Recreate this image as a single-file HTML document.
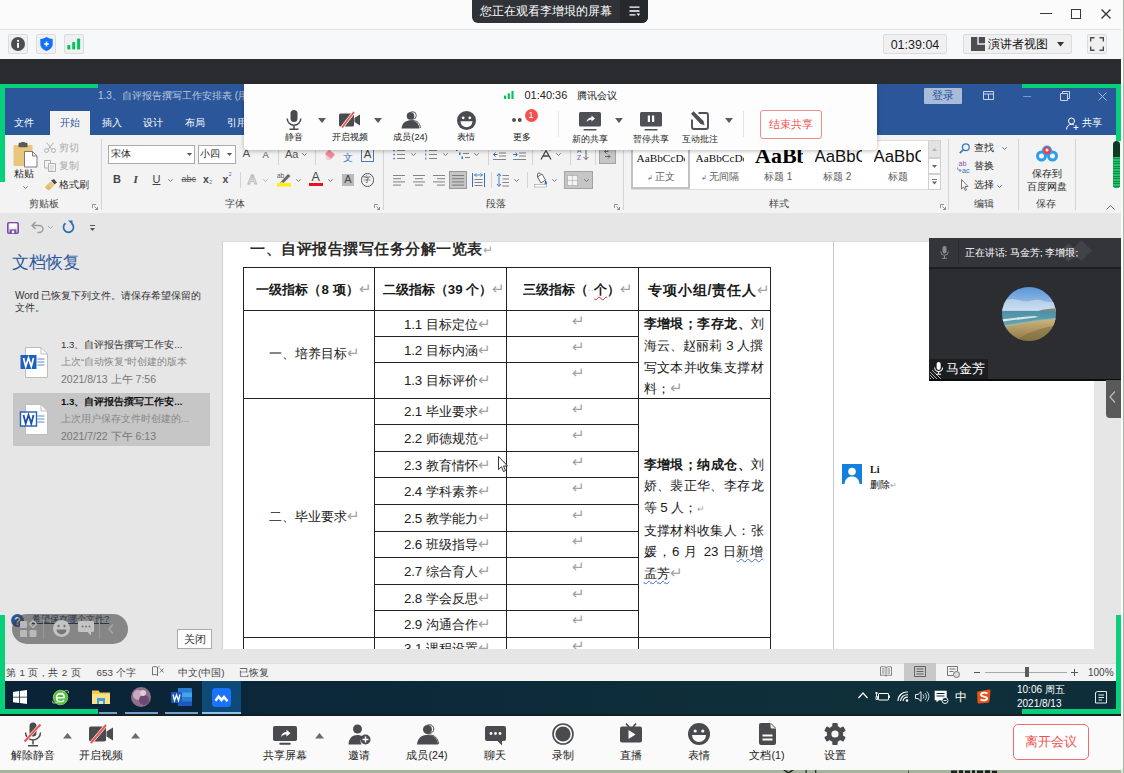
<!DOCTYPE html>
<html><head><meta charset="utf-8"><title>meeting</title>
<style>
html,body{margin:0;padding:0;width:1124px;height:773px;overflow:hidden;background:#a3b69c;font-family:"Liberation Sans",sans-serif;}
*{box-sizing:border-box;}
.a{position:absolute;white-space:nowrap;line-height:1;}
.s{font-family:"Liberation Sans",sans-serif;}
svg{position:absolute;overflow:visible;}
#win{left:0;top:0;width:1122.500px;height:769.500px;background:#fbfbfb;border-radius:0 0 4px 0;overflow:hidden;}
.ib{width:20px;height:20px;top:34px;background:#f0f0f1;border:1px solid #dcdcde;border-radius:2px;}
.wt{color:#fff;font-size:10px;top:117.500px;}
.rl{color:#444;font-size:10.5px;top:199px;}
.rt{color:#333;font-size:11px;}
.sep{width:1px;background:#d4d4d4;top:140px;height:70px;}
.hl{height:1px;background:#222;}
.vl{width:1px;background:#222;}
.c2{font-size:13.3px;color:#222;left:404px;}
.ret{color:#a3a3a3;font-size:15px;line-height:0;font-family:"Liberation Sans",sans-serif;font-weight:normal;letter-spacing:0}
.tl{font-size:11px;color:#333;}
.bt{font-size:10.700px;color:#222;top:749.500px;text-align:center;width:80px;}
.ft{font-size:9.200px;color:#222;top:133px;text-align:center;width:70px;}
</style></head><body>
<div class="a" style="left:1121px;top:0;width:3px;height:773px;background:#e3e7e2"></div><div class="a" style="left:1122.500px;top:0;width:1px;height:773px;background:#a3bba1"></div>
<svg style="left:782px;top:770px" width="220" height="3" viewBox="0 0 220 3"><path d="M1 0l4 3h3l4-3h-2.500L6.500 2 3.500 0z" fill="#1f2a1f"></path><rect x="23.500" y="0" width="1.300" height="3" fill="#2a352a"></rect><rect x="33" y="0" width="1.300" height="3" fill="#2a352a"></rect><rect x="126" y="0.500" width="1" height="2.500" fill="#4a5a48"></rect><path d="M169 0.500h6v2.500h-6zM177 0.300h4v2.700h-4zM183 0.600h5v2.400h-5zM190 0.300h3v2.700h-3zM195 0.500h6v2.500h-6zM203 0.300h5v2.700h-5zM210 0.800h5v2.200h-5z" fill="#1c241c"></path></svg>
<div id="win" class="a">
<!--TITLEBAR-->
<div class="a" style="left:0;top:0;width:1121px;height:30px;background:#fbfbfb;border-bottom:1px solid #e2e3e5"></div>
<div class="a" style="left:472px;top:0;width:176px;height:23px;background:#2f3237;border-radius:0 0 6px 6px;overflow:hidden">
  <div class="a" style="left:148px;top:0;width:28px;height:23px;background:#26282c"></div>
  <div class="a" style="left:8px;top:5px;font-size:12px;color:#fff"><span style="display:inline-block;width:132.00px;text-align:justify;text-align-last:justify;white-space:nowrap;">您正在观看李增垠的屏幕</span></div>
  <svg style="left:157px;top:6px" width="12" height="11" viewBox="0 0 12 11"><path d="M0.5 1.2H10.5M0.5 5H10.5M0.5 8.8H6.5" stroke="#fff" stroke-width="1.3" fill="none"></path><path d="M7.6 7.6h3.6l-1.8 2.4z" fill="#fff"></path></svg>
</div>
<div class="a" style="left:1040px;top:13px;width:12px;height:1.200px;background:#3a3a3a"></div>
<div class="a" style="left:1071px;top:9px;width:10px;height:10px;border:1.300px solid #3a3a3a"></div>
<svg style="left:1101px;top:9px" width="10" height="10" viewBox="0 0 10 10"><path d="M0.5 0.5L9.5 9.5M9.5 0.5L0.5 9.5" stroke="#333" stroke-width="1.4"></path></svg>
<!--SECONDBAR-->
<div class="a" style="left:0;top:30px;width:1121px;height:29px;background:#f7f8fa"></div>
<div class="a ib" style="left:8px"></div>
<svg style="left:11px;top:37px" width="14" height="14" viewBox="0 0 14 14"><circle cx="7" cy="7" r="7" fill="#4c4d50"></circle><rect x="6.1" y="5.8" width="1.9" height="5" fill="#fff"></rect><circle cx="7.05" cy="3.8" r="1.1" fill="#fff"></circle></svg>
<div class="a ib" style="left:36px"></div>
<svg style="left:39.5px;top:37px" width="13" height="14" viewBox="0 0 13 14"><path d="M6.5 0C4.5 1.3 2.5 1.8 0.3 1.9V7c0 3.4 2.5 5.6 6.2 7 3.700-1.4 6.200-3.600 6.200-7V1.900C10.500 1.800 8.500 1.300 6.500 0z" fill="#1470ff"></path><path d="M6.500 4.600v4.800M4.100 7h4.800" stroke="#fff" stroke-width="1.500"></path></svg>
<div class="a ib" style="left:64px"></div>
<svg style="left:67px;top:38px" width="14" height="12" viewBox="0 0 14 12"><rect x="0.3" y="7" width="3" height="4.500" rx="0.8" fill="#07c160"></rect><rect x="5.2" y="4" width="3" height="7.500" rx="0.8" fill="#07c160"></rect><rect x="10.100" y="0.5" width="3" height="11" rx="0.8" fill="#07c160"></rect></svg>
<div class="a" style="left:883px;top:34px;width:64px;height:20px;background:#f0f0f1;border:1px solid #dcdcde;border-radius:2px;font-size:12.500px;color:#1c1c1c;text-align:center;padding-top:3.500px">01:39:04</div>
<div class="a" style="left:963px;top:34px;width:109px;height:20px;background:#f0f0f1;border:1px solid #dcdcde;border-radius:2px"></div>
<svg style="left:971px;top:37px" width="14" height="14" viewBox="0 0 14 14"><path d="M0 0h6.300v7.700H14V14H0z" fill="#4c4d50"></path><rect x="7.700" y="0" width="6.300" height="6.300" fill="#4c4d50"></rect></svg>
<div class="a" style="left:988px;top:38px;font-size:12px;color:#111"><span style="display:inline-block;width:60.00px;text-align:justify;text-align-last:justify;white-space:nowrap;">演讲者视图</span></div>
<svg style="left:1057px;top:42px" width="7" height="5" viewBox="0 0 7 5"><path d="M0 0h7L3.500 4.500z" fill="#333"></path></svg>
<div class="a ib" style="left:1087px"></div>
<svg style="left:1090px;top:37px" width="14" height="14" viewBox="0 0 14 14"><path d="M0.700 4.500V0.700H4.500M9.500 0.700H13.300V4.500M13.300 9.500V13.300H9.500M4.500 13.300H0.700V9.500" stroke="#4c4d50" stroke-width="1.400" fill="none"></path></svg>
<!--DARKBAR-->
<div class="a" style="left:0;top:59px;width:1121px;height:25px;background:#2a2c30"></div>
<!--WORD-->
<div class="a" style="left:0;top:84px;width:1121px;height:51px;background:#2b579a"></div>
<div class="a" style="left:98px;top:90.500px;font-size:10px;color:#b9c7df"><span style="display:inline-block;width:150.02px;text-align:justify;text-align-last:justify;white-space:nowrap;">1.3、自评报告撰写工作安排表 (用</span></div>
<div class="a" style="left:50px;top:111px;width:40px;height:24px;background:#f3f3f3"></div>
<div class="a wt" style="left:14px"><span style="display:inline-block;width:20.00px;text-align:justify;text-align-last:justify;white-space:nowrap;">文件</span></div>
<div class="a wt" style="left:60px;color:#2b579a"><span style="display:inline-block;width:20.00px;text-align:justify;text-align-last:justify;white-space:nowrap;">开始</span></div>
<div class="a wt" style="left:101.500px"><span style="display:inline-block;width:20.00px;text-align:justify;text-align-last:justify;white-space:nowrap;">插入</span></div>
<div class="a wt" style="left:143px"><span style="display:inline-block;width:20.00px;text-align:justify;text-align-last:justify;white-space:nowrap;">设计</span></div>
<div class="a wt" style="left:185px"><span style="display:inline-block;width:20.00px;text-align:justify;text-align-last:justify;white-space:nowrap;">布局</span></div>
<div class="a wt" style="left:227px"><span style="display:inline-block;width:20.00px;text-align:justify;text-align-last:justify;white-space:nowrap;">引用</span></div>
<div class="a" style="left:924px;top:88px;width:38px;height:16px;background:#a8bbd9;border-radius:1px;font-size:11px;color:#2b579a;text-align:center;padding-top:2px"><span style="display:inline-block;width:22.00px;text-align:justify;text-align-last:justify;white-space:nowrap;">登录</span></div>
<svg style="left:983px;top:91px" width="11" height="9" viewBox="0 0 11 9"><path d="M0.500 0.500h10v8h-10zM0.500 3h10M5.500 3v5.500" stroke="#c9d4e8" stroke-width="1" fill="none"></path></svg>
<div class="a" style="left:1023px;top:96px;width:8px;height:1px;background:#7f98c2"></div>
<svg style="left:1060px;top:91px" width="10" height="10" viewBox="0 0 10 10"><path d="M0.500 2.500h7v7h-7zM2.500 2.500v-2h7v7h-2" stroke="#c9d4e8" stroke-width="1" fill="none"></path></svg>
<svg style="left:1098px;top:92px" width="9" height="9" viewBox="0 0 9 9"><path d="M0.500 0.500L8.500 8.500M8.500 0.500L0.500 8.500" stroke="#a9bad6" stroke-width="1"></path></svg>
<svg style="left:1066px;top:117px" width="13" height="13" viewBox="0 0 13 13"><circle cx="5.500" cy="4" r="3" stroke="#fff" stroke-width="1" fill="none"></circle><path d="M0.500 12.500c0.300-3.500 2.300-5.200 5-5.200 1 0 1.800 0.200 2.500 0.700M10 8v5M7.500 10.500h5" stroke="#fff" stroke-width="1" fill="none"></path></svg>
<div class="a wt" style="left:1081.500px"><span style="display:inline-block;width:20.00px;text-align:justify;text-align-last:justify;white-space:nowrap;">共享</span></div>
<!-- ribbon bg -->
<div class="a" style="left:0;top:135px;width:1121px;height:78.500px;background:#f3f3f3;border-bottom:1px solid #d2d2d2"></div>
<!--RIBBON-->
<svg style="left:13px;top:142px" width="25" height="26" viewBox="0 0 25 26"><rect x="0.500" y="3" width="19" height="21" rx="1" fill="#e9c67c"></rect><rect x="5.500" y="0.800" width="9" height="4.500" rx="1" fill="#5a5a5a"></rect><rect x="8" y="0" width="4" height="2.500" rx="1" fill="#5a5a5a"></rect><path d="M11.500 9.500h8l4.500 4.500v11h-12.500z" fill="#fff" stroke="#6d6d6d" stroke-width="0.900"></path><path d="M19.500 9.500v4.500h4.500" fill="none" stroke="#6d6d6d" stroke-width="0.900"></path></svg>
<div class="a " style="left:13.5px;top:169.4px;font-size:10px;color:#262626;"><span style="display:inline-block;width:20.00px;text-align:justify;text-align-last:justify;white-space:nowrap;">粘贴</span></div>
<svg style="left:22.5px;top:186.0px" width="5" height="3" viewBox="0 0 5 3"><path d="M0.300 0.300L2.500 2.500 4.700 0.300" stroke="#666" stroke-width="0.900" fill="none"></path></svg>
<svg style="left:44px;top:142px" width="12" height="11" viewBox="0 0 12 11"><path d="M2.500 0.500l5.500 7M9.500 0.500L4 7.500" stroke="#b0b0b0" stroke-width="1"></path><circle cx="2.500" cy="8.500" r="2" stroke="#b0b0b0" stroke-width="1" fill="none"></circle><circle cx="9.500" cy="8.500" r="2" stroke="#b0b0b0" stroke-width="1" fill="none"></circle></svg>
<div class="a " style="left:59.3px;top:142.5px;font-size:10px;color:#a9a9a9;"><span style="display:inline-block;width:20.00px;text-align:justify;text-align-last:justify;white-space:nowrap;">剪切</span></div>
<svg style="left:43.500px;top:160px" width="12" height="12" viewBox="0 0 12 12"><path d="M0.500 0.500h6v7.500h-6z" stroke="#b0b0b0" fill="none"></path><path d="M4.500 3.500h7v8h-7z" stroke="#b0b0b0" fill="#f3f3f3"></path><path d="M6 6h4M6 8h4M6 10h3" stroke="#c4c4c4" stroke-width="0.800"></path></svg>
<div class="a " style="left:59.3px;top:161.1px;font-size:10px;color:#a9a9a9;"><span style="display:inline-block;width:20.00px;text-align:justify;text-align-last:justify;white-space:nowrap;">复制</span></div>
<svg style="left:44px;top:179px" width="13" height="12" viewBox="0 0 13 12"><path d="M7 1.500l3-1.500 3 3.500-2.500 2z" fill="#4d4d4d"></path><path d="M6.500 2.500L10.500 6 5 11.500 0.500 8z" fill="#e9c67c"></path><path d="M2 8.500l3 2.500M3.500 7l3 2.500" stroke="#c49a44" stroke-width="0.700"></path></svg>
<div class="a " style="left:59.3px;top:180.3px;font-size:10px;color:#262626;"><span style="display:inline-block;width:30.00px;text-align:justify;text-align-last:justify;white-space:nowrap;">格式刷</span></div>
<div class="a " style="left:28.6px;top:199.300px;font-size:10px;color:#444;"><span style="display:inline-block;width:30.00px;text-align:justify;text-align-last:justify;white-space:nowrap;">剪贴板</span></div>
<svg style="left:92px;top:204px" width="6" height="6" viewBox="0 0 6 6"><path d="M0.500 4V0.500H4M2.500 2.500l3 3M5.500 3v2.500H3" stroke="#777" stroke-width="0.800" fill="none"></path></svg>
<div class="a" style="left:101px;top:139px;width:1px;height:71px;background:#d4d4d4"></div>
<div class="a" style="left:107.500px;top:145px;width:87.500px;height:18.500px;background:#fff;border:1px solid #ababab"></div>
<div class="a " style="left:110.5px;top:149.0px;font-size:10px;color:#262626;"><span style="display:inline-block;width:20.00px;text-align:justify;text-align-last:justify;white-space:nowrap;">宋体</span></div>
<svg style="left:187px;top:153px" width="5" height="3" viewBox="0 0 5 3"><path d="M0 0h5L2.500 3z" fill="#555"></path></svg>
<div class="a" style="left:197.500px;top:145px;width:38px;height:18.500px;background:#fff;border:1px solid #ababab"></div>
<div class="a " style="left:200px;top:149.0px;font-size:10px;color:#262626;"><span style="display:inline-block;width:20.00px;text-align:justify;text-align-last:justify;white-space:nowrap;">小四</span></div>
<svg style="left:227px;top:153px" width="5" height="3" viewBox="0 0 5 3"><path d="M0 0h5L2.500 3z" fill="#555"></path></svg>
<div class="a " style="left:242.5px;top:148.4px;font-size:11.5px;color:#555;">A</div>
<svg style="left:249px;top:147px" width="4" height="3" viewBox="0 0 4 3"><path d="M0 3L2 0.500 4 3" fill="#3b78c8"></path></svg>
<div class="a " style="left:262.5px;top:150.2px;font-size:9.5px;color:#555;">A</div>
<svg style="left:268px;top:148px" width="4" height="3" viewBox="0 0 4 3"><path d="M0 0L2 2.500 4 0" fill="#3b78c8"></path></svg>
<div class="a" style="left:278px;top:144px;width:1px;height:21px;background:#d4d4d4"></div>
<div class="a " style="left:285px;top:148.7px;font-size:11px;color:#555;">Aa</div>
<svg style="left:302.2px;top:153.0px" width="5" height="3" viewBox="0 0 5 3"><path d="M0.300 0.300L2.500 2.500 4.700 0.300" stroke="#666" stroke-width="0.900" fill="none"></path></svg>
<div class="a" style="left:315px;top:144px;width:1px;height:21px;background:#d4d4d4"></div>
<svg style="left:324px;top:148px" width="12" height="12" viewBox="0 0 12 12"><path d="M5 1.500l6 5-4 4.500-6-5z" fill="#ec8a9a"></path><path d="M1 6l6 5-1.500 1H3z" fill="#f6c7cf"></path><path d="M0 0.800L3 0l-1.500 2.500z" fill="#777"></path></svg>
<div class="a " style="left:343px;top:153.4px;font-size:9.5px;color:#2f6fc5;"><span style="display:inline-block;width:10.00px;text-align:justify;text-align-last:justify;white-space:nowrap;">文</span></div>
<div class="a " style="left:342.5px;top:146.4px;font-size:5.5px;color:#555;">wén</div>
<div class="a" style="left:361px;top:147px;width:13px;height:14.500px;border:1px solid #4d79b8;font-size:11.500px;color:#444;text-align:center;padding-top:0.500px">A</div>
<div class="a " style="left:113px;top:173.8px;font-size:11px;color:#444;font-weight:bold">B</div>
<div class="a " style="left:133.5px;top:173.8px;font-size:11px;color:#444;font-style:italic;font-weight:bold;font-family:'Liberation Serif',serif">I</div>
<div class="a " style="left:152.5px;top:173.6px;font-size:11px;color:#444;text-decoration:underline">U</div>
<svg style="left:168.2px;top:178.5px" width="5" height="3" viewBox="0 0 5 3"><path d="M0.300 0.300L2.500 2.500 4.700 0.300" stroke="#666" stroke-width="0.900" fill="none"></path></svg>
<div class="a " style="left:181.5px;top:175.0px;font-size:9px;color:#555;text-decoration:line-through">abc</div>
<div class="a " style="left:203px;top:174.0px;font-size:10.5px;color:#444;font-weight:bold">x</div>
<div class="a " style="left:209px;top:180.4px;font-size:5.5px;color:#3b78c8;">2</div>
<div class="a " style="left:222.5px;top:174.0px;font-size:10.5px;color:#444;font-weight:bold">x</div>
<div class="a " style="left:228.5px;top:171.9px;font-size:5.5px;color:#3b78c8;">2</div>
<div class="a" style="left:240px;top:172px;width:1px;height:16px;background:#d4d4d4"></div>
<div class="a " style="left:247.5px;top:172.8px;font-size:13px;color:#f3f3f3;-webkit-text-stroke:0.800px #b4b4b4;font-weight:bold">A</div>
<svg style="left:263.3px;top:178.5px" width="5" height="3" viewBox="0 0 5 3"><path d="M0.300 0.300L2.500 2.500 4.700 0.300" stroke="#aaa" stroke-width="0.900" fill="none"></path></svg>
<svg style="left:277px;top:172px" width="15" height="15" viewBox="0 0 15 15"><text x="0" y="6" font-size="6.500" fill="#555" font-family="Liberation Sans">ab</text><path d="M4 9.500L11 2l2.500 2L6.500 11z" fill="#6a6a6a"></path><path d="M3.500 10L6 12l-3 0.500z" fill="#555"></path><rect x="0" y="11" width="14" height="3.500" fill="#ffef00"></rect></svg>
<svg style="left:296.2px;top:178.5px" width="5" height="3" viewBox="0 0 5 3"><path d="M0.300 0.300L2.500 2.500 4.700 0.300" stroke="#666" stroke-width="0.900" fill="none"></path></svg>
<div class="a " style="left:311.5px;top:171.4px;font-size:12.5px;color:#444;">A</div>
<div class="a" style="left:309px;top:182.500px;width:13.500px;height:3.500px;background:#e81123"></div>
<svg style="left:328.4px;top:178.5px" width="5" height="3" viewBox="0 0 5 3"><path d="M0.300 0.300L2.500 2.500 4.700 0.300" stroke="#666" stroke-width="0.900" fill="none"></path></svg>
<div class="a" style="left:342px;top:173.500px;width:12px;height:12px;background:#b9b9b9;font-size:11px;color:#444;text-align:center;padding-top:0.500px">A</div>
<div class="a" style="left:360.500px;top:173px;width:13.500px;height:13.500px;border:1px solid #555;border-radius:50%;font-size:8px;color:#333;text-align:center;padding-top:2px"><span style="display:inline-block;width:8.00px;text-align:justify;text-align-last:justify;white-space:nowrap;">字</span></div>
<div class="a " style="left:224.500px;top:199.300px;font-size:10px;color:#444;"><span style="display:inline-block;width:20.00px;text-align:justify;text-align-last:justify;white-space:nowrap;">字体</span></div>
<svg style="left:374px;top:204px" width="6" height="6" viewBox="0 0 6 6"><path d="M0.500 4V0.500H4M2.500 2.500l3 3M5.500 3v2.500H3" stroke="#777" stroke-width="0.800" fill="none"></path></svg>
<div class="a" style="left:382.5px;top:139px;width:1px;height:71px;background:#d4d4d4"></div>
<svg style="left:393px;top:149px" width="12" height="11" viewBox="0 0 12 11"><path d="M4 1.5h8" stroke="#6e6e6e" stroke-width="0.850"></path><rect x="0.300" y="0.8" width="1.500" height="1.500" fill="#2f6fc5"></rect><path d="M4 5.5h8" stroke="#6e6e6e" stroke-width="0.850"></path><rect x="0.300" y="4.8" width="1.500" height="1.500" fill="#2f6fc5"></rect><path d="M4 9.5h8" stroke="#6e6e6e" stroke-width="0.850"></path><rect x="0.300" y="8.8" width="1.500" height="1.500" fill="#2f6fc5"></rect></svg>
<svg style="left:410.5px;top:153.0px" width="5" height="3" viewBox="0 0 5 3"><path d="M0.300 0.300L2.500 2.500 4.700 0.300" stroke="#666" stroke-width="0.900" fill="none"></path></svg>
<svg style="left:424.5px;top:149px" width="12" height="11" viewBox="0 0 12 11"><path d="M4 1.5h8" stroke="#6e6e6e" stroke-width="0.850"></path><rect x="0.300" y="0.5" width="1" height="2" fill="#2f6fc5"></rect><path d="M4 5.5h8" stroke="#6e6e6e" stroke-width="0.850"></path><rect x="0.300" y="4.5" width="1" height="2" fill="#2f6fc5"></rect><path d="M4 9.5h8" stroke="#6e6e6e" stroke-width="0.850"></path><rect x="0.300" y="8.5" width="1" height="2" fill="#2f6fc5"></rect></svg>
<svg style="left:443.0px;top:153.0px" width="5" height="3" viewBox="0 0 5 3"><path d="M0.300 0.300L2.500 2.500 4.700 0.300" stroke="#666" stroke-width="0.900" fill="none"></path></svg>
<svg style="left:455.500px;top:148px" width="14" height="12" viewBox="0 0 14 12"><path d="M4 1.500h6M7 5.500h6M9 9.500h5" stroke="#6e6e6e" stroke-width="0.850"></path><rect x="0" y="0.500" width="1.500" height="2.500" fill="#2f6fc5"></rect><rect x="3" y="4.500" width="1.500" height="2.500" fill="#2f6fc5"></rect><rect x="5.500" y="8.500" width="1.500" height="2.500" fill="#2f6fc5"></rect></svg>
<svg style="left:473.5px;top:153.0px" width="5" height="3" viewBox="0 0 5 3"><path d="M0.300 0.300L2.500 2.500 4.700 0.300" stroke="#666" stroke-width="0.900" fill="none"></path></svg>
<div class="a" style="left:488px;top:144px;width:1px;height:21px;background:#d4d4d4"></div>
<svg style="left:493px;top:149px" width="13" height="11" viewBox="0 0 13 11"><path d="M0 0.500h13M6 4h7M6 7h7M0 10.500h13" stroke="#6e6e6e" stroke-width="0.850"></path><path d="M4.500 5.500H0.500M2.500 3.500l-2 2 2 2" stroke="#2f6fc5" stroke-width="1" fill="none"></path></svg>
<svg style="left:513px;top:149px" width="13" height="11" viewBox="0 0 13 11"><path d="M0 0.500h13M6 4h7M6 7h7M0 10.500h13" stroke="#6e6e6e" stroke-width="0.850"></path><path d="M0 5.500h4M2.500 3.500l2 2-2 2" stroke="#2f6fc5" stroke-width="1" fill="none"></path></svg>
<div class="a" style="left:532px;top:144px;width:1px;height:21px;background:#d4d4d4"></div>
<svg style="left:538.500px;top:148px" width="14" height="12" viewBox="0 0 14 12"><path d="M2 11.500L7 2.500l5 9M4 8h6" stroke="#444" stroke-width="1.300" fill="none"></path><path d="M0 1.500h4M2.500 0l1.500 1.500L2.500 3M14 1.500h-4M11.500 0L10 1.500 11.500 3" stroke="#2f6fc5" stroke-width="0.800" fill="none"></path></svg>
<svg style="left:555.5px;top:153.0px" width="5" height="3" viewBox="0 0 5 3"><path d="M0.300 0.300L2.500 2.500 4.700 0.300" stroke="#666" stroke-width="0.900" fill="none"></path></svg>
<div class="a" style="left:569.5px;top:144px;width:1px;height:21px;background:#d4d4d4"></div>
<svg style="left:576.500px;top:147px" width="12" height="14" viewBox="0 0 12 14"><text x="0" y="6" font-size="6.500" fill="#2f6fc5" font-family="Liberation Sans">A</text><text x="0" y="13" font-size="6.500" fill="#8a4fb0" font-family="Liberation Sans">Z</text><path d="M9 0.500v12M6.500 10L9 12.500 11.500 10" stroke="#555" stroke-width="0.900" fill="none"></path></svg>
<div class="a" style="left:594.5px;top:144px;width:1px;height:21px;background:#d4d4d4"></div>
<div class="a" style="left:598.500px;top:145px;width:17.500px;height:18.500px;background:#c6c6c6;border:1px solid #a3a3a3"></div>
<svg style="left:602px;top:148px" width="10" height="12" viewBox="0 0 10 12"><path d="M6 0v3.500H2.500M4.500 1.500l-2 2 2 2" stroke="#555" stroke-width="0.900" fill="none"></path><path d="M3 8.500h5M6 6.500l2 2-2 2" stroke="#555" stroke-width="0.900" fill="none"></path></svg>
<svg style="left:393px;top:174.500px" width="12" height="11" viewBox="0 0 12 11"><path d="M0 0.5h12" stroke="#6e6e6e" stroke-width="0.850"></path><path d="M0 3.7h8" stroke="#6e6e6e" stroke-width="0.850"></path><path d="M0 6.9h12" stroke="#6e6e6e" stroke-width="0.850"></path><path d="M0 10.1h8" stroke="#6e6e6e" stroke-width="0.850"></path></svg>
<svg style="left:413px;top:174.500px" width="12" height="11" viewBox="0 0 12 11"><path d="M0.0 0.5h12" stroke="#6e6e6e" stroke-width="0.850"></path><path d="M2.0 3.7h8" stroke="#6e6e6e" stroke-width="0.850"></path><path d="M0.0 6.9h12" stroke="#6e6e6e" stroke-width="0.850"></path><path d="M2.0 10.1h8" stroke="#6e6e6e" stroke-width="0.850"></path></svg>
<svg style="left:432.5px;top:174.500px" width="12" height="11" viewBox="0 0 12 11"><path d="M0 0.5h12" stroke="#6e6e6e" stroke-width="0.850"></path><path d="M4 3.7h8" stroke="#6e6e6e" stroke-width="0.850"></path><path d="M0 6.9h12" stroke="#6e6e6e" stroke-width="0.850"></path><path d="M4 10.1h8" stroke="#6e6e6e" stroke-width="0.850"></path></svg>
<div class="a" style="left:449px;top:170.500px;width:18px;height:18.500px;background:#c6c6c6;border:1px solid #999"></div>
<svg style="left:452px;top:174.500px" width="12" height="11" viewBox="0 0 12 11"><path d="M0 0.5h12" stroke="#6e6e6e" stroke-width="0.850"></path><path d="M0 3.7h12" stroke="#6e6e6e" stroke-width="0.850"></path><path d="M0 6.9h12" stroke="#6e6e6e" stroke-width="0.850"></path><path d="M0 10.1h12" stroke="#6e6e6e" stroke-width="0.850"></path></svg>
<svg style="left:471.500px;top:173px" width="13" height="14" viewBox="0 0 13 14"><path d="M0.500 0v14M12.500 0v14" stroke="#2f6fc5" stroke-width="1"></path><path d="M2.500 2h8M4.500 0.500L2.500 2l2 1.500M8.500 0.500l2 1.500-2 1.500" stroke="#2f6fc5" stroke-width="0.800" fill="none"></path><path d="M2.500 6.500h8M2.500 9.500h8M2.500 12.500h8" stroke="#6e6e6e" stroke-width="0.850"></path></svg>
<div class="a" style="left:490.5px;top:172px;width:1px;height:16px;background:#d4d4d4"></div>
<svg style="left:497px;top:173px" width="12" height="14" viewBox="0 0 12 14"><path d="M2 1v12M0 3l2-2.500L4 3M0 11l2 2.500L4 11" stroke="#2f6fc5" stroke-width="0.900" fill="none"></path><path d="M5.500 2.500h6.500M5.500 6h6.500M5.500 9.500h6.500M5.500 13h6.500" stroke="#6e6e6e" stroke-width="0.850"></path></svg>
<svg style="left:513.5px;top:178.5px" width="5" height="3" viewBox="0 0 5 3"><path d="M0.300 0.300L2.500 2.500 4.700 0.300" stroke="#666" stroke-width="0.900" fill="none"></path></svg>
<div class="a" style="left:527px;top:172px;width:1px;height:16px;background:#d4d4d4"></div>
<svg style="left:533.500px;top:172.500px" width="14" height="14" viewBox="0 0 14 14"><path d="M3.500 4l4.500-3 3.500 6L7 10z" fill="#fff" stroke="#555" stroke-width="0.900"></path><path d="M3.500 4V1.500a1.500 1.500 0 0 1 3 0" stroke="#555" stroke-width="0.900" fill="none"></path><path d="M11.500 7c1 1.500 1.500 2.500 1.500 3.300a1.200 1.200 0 0 1-2.400 0C10.600 9.500 11 8.500 11.500 7z" fill="#2f6fc5"></path><rect x="0.500" y="11.500" width="12" height="2.500" fill="#fff" stroke="#9a9a9a" stroke-width="0.600"></rect></svg>
<svg style="left:552.2px;top:178.5px" width="5" height="3" viewBox="0 0 5 3"><path d="M0.300 0.300L2.500 2.500 4.700 0.300" stroke="#666" stroke-width="0.900" fill="none"></path></svg>
<div class="a" style="left:563.500px;top:170.500px;width:29.500px;height:18.500px;background:#c6c6c6;border:1px solid #a3a3a3"></div>
<svg style="left:566.500px;top:174.500px" width="11" height="11" viewBox="0 0 11 11"><rect x="0.500" y="0.500" width="10" height="10" fill="#f4f4f4" stroke="#888" stroke-width="0.800" stroke-dasharray="1 1"></rect><path d="M5.500 0.500v10M0.500 5.500h10" stroke="#888" stroke-width="0.800" stroke-dasharray="1 1"></path></svg>
<svg style="left:584.1px;top:178.5px" width="5" height="3" viewBox="0 0 5 3"><path d="M0.300 0.300L2.500 2.500 4.700 0.300" stroke="#666" stroke-width="0.900" fill="none"></path></svg>
<div class="a " style="left:485.5px;top:199.300px;font-size:10px;color:#444;"><span style="display:inline-block;width:20.00px;text-align:justify;text-align-last:justify;white-space:nowrap;">段落</span></div>
<svg style="left:614px;top:204px" width="6" height="6" viewBox="0 0 6 6"><path d="M0.500 4V0.500H4M2.500 2.500l3 3M5.500 3v2.500H3" stroke="#777" stroke-width="0.800" fill="none"></path></svg>
<div class="a" style="left:622.5px;top:139px;width:1px;height:71px;background:#d4d4d4"></div>
<div class="a" style="left:630.500px;top:140px;width:298px;height:49.500px;background:#fff;border:1px solid #dcdcdc"></div>
<div class="a" style="left:631px;top:141px;width:58.500px;height:48px;border:2px solid #c2c2c2"></div>
<div class="a" style="left:636.5px;top:145px;width:48.5px;height:25px;overflow:hidden"><div class="a" style="left:0;top:8px;font-size:11.300px;font-family:'Liberation Serif',serif;color:#111;">AaBbCcDc</div></div>
<div class="a " style="left:646.5px;top:172.4px;font-size:10px;color:#5a5a5a;"><span style="font-size:7px;color:#777;margin-right:2.800px">↲</span><span style="display:inline-block;width:20.00px;text-align:justify;text-align-last:justify;white-space:nowrap;">正文</span></div>
<div class="a" style="left:695.5px;top:145px;width:48.5px;height:25px;overflow:hidden"><div class="a" style="left:0;top:8px;font-size:11.300px;font-family:'Liberation Serif',serif;color:#111;">AaBbCcDc</div></div>
<div class="a " style="left:700.5px;top:172.4px;font-size:10px;color:#5a5a5a;"><span style="font-size:7px;color:#777;margin-right:2.800px">↲</span><span style="display:inline-block;width:30.00px;text-align:justify;text-align-last:justify;white-space:nowrap;">无间隔</span></div>
<div class="a" style="left:755px;top:145px;width:48px;height:25px;overflow:hidden"><div class="a" style="left:0;top:0px;font-size:22px;font-family:'Liberation Serif',serif;color:#000;font-weight:bold;">AaBb</div></div>
<div class="a " style="left:764px;top:172.4px;font-size:10px;color:#5a5a5a;"><span style="display:inline-block;width:28.34px;text-align:justify;text-align-last:justify;white-space:nowrap;">标题 1</span></div>
<div class="a" style="left:814.5px;top:145px;width:47.5px;height:25px;overflow:hidden"><div class="a" style="left:0;top:4px;font-size:16.800px;font-family:'Liberation Sans',sans-serif;color:#111;">AaBbC</div></div>
<div class="a " style="left:823px;top:172.4px;font-size:10px;color:#5a5a5a;"><span style="display:inline-block;width:28.34px;text-align:justify;text-align-last:justify;white-space:nowrap;">标题 2</span></div>
<div class="a" style="left:873.5px;top:145px;width:47.5px;height:25px;overflow:hidden"><div class="a" style="left:0;top:4px;font-size:16.800px;font-family:'Liberation Sans',sans-serif;color:#111;">AaBbC</div></div>
<div class="a " style="left:887.5px;top:172.4px;font-size:10px;color:#5a5a5a;"><span style="display:inline-block;width:20.00px;text-align:justify;text-align-last:justify;white-space:nowrap;">标题</span></div>
<div class="a" style="left:928px;top:140px;width:12.500px;height:17.500px;background:#e3e3e3;border:1px solid #d0d0d0"></div>
<svg style="left:931.500px;top:148px" width="5" height="3" viewBox="0 0 5 3"><path d="M0 3h5L2.500 0z" fill="#b5b5b5"></path></svg>
<div class="a" style="left:928px;top:158px;width:12.500px;height:15.500px;background:#fdfdfd;border:1px solid #d0d0d0"></div>
<svg style="left:931.500px;top:165px" width="5" height="3" viewBox="0 0 5 3"><path d="M0 0h5L2.500 3z" fill="#666"></path></svg>
<div class="a" style="left:928px;top:174px;width:12.500px;height:15.500px;background:#fdfdfd;border:1px solid #d0d0d0"></div>
<svg style="left:931.500px;top:179px" width="5" height="6" viewBox="0 0 5 6"><path d="M0 0.500h5" stroke="#666" stroke-width="0.900"></path><path d="M0 2.500h5L2.500 5.500z" fill="#666"></path></svg>
<div class="a " style="left:768.5px;top:199.300px;font-size:10px;color:#444;"><span style="display:inline-block;width:20.00px;text-align:justify;text-align-last:justify;white-space:nowrap;">样式</span></div>
<svg style="left:939.5px;top:204px" width="6" height="6" viewBox="0 0 6 6"><path d="M0.500 4V0.500H4M2.500 2.500l3 3M5.500 3v2.500H3" stroke="#777" stroke-width="0.800" fill="none"></path></svg>
<div class="a" style="left:948px;top:139px;width:1px;height:71px;background:#d4d4d4"></div>
<svg style="left:958.500px;top:142.500px" width="11" height="11" viewBox="0 0 11 11"><circle cx="6.800" cy="4.200" r="3.400" stroke="#3b78c8" stroke-width="1.300" fill="none"></circle><path d="M4.300 6.700L0.800 10.200" stroke="#3b78c8" stroke-width="1.700"></path></svg>
<div class="a " style="left:973.5px;top:142.5px;font-size:10px;color:#262626;"><span style="display:inline-block;width:20.00px;text-align:justify;text-align-last:justify;white-space:nowrap;">查找</span></div>
<svg style="left:1001.7px;top:146.5px" width="5" height="3" viewBox="0 0 5 3"><path d="M0.300 0.300L2.500 2.500 4.700 0.300" stroke="#666" stroke-width="0.900" fill="none"></path></svg>
<svg style="left:957px;top:160px" width="14" height="13" viewBox="0 0 14 13"><text x="1.500" y="6" font-size="7" fill="#8a4fb0" font-family="Liberation Sans">ab</text><text x="5" y="12.500" font-size="7" fill="#2f6fc5" font-family="Liberation Sans">ac</text><path d="M0.500 7.500c0 2 1 3 3 3M2.500 9l1.500 1.500-1.500 1.500" stroke="#2f6fc5" stroke-width="0.800" fill="none"></path></svg>
<div class="a " style="left:973.5px;top:161.1px;font-size:10px;color:#262626;"><span style="display:inline-block;width:20.00px;text-align:justify;text-align-last:justify;white-space:nowrap;">替换</span></div>
<svg style="left:961px;top:179px" width="8" height="12" viewBox="0 0 8 12"><path d="M0.500 0.500v9.500l2.300-2 1.500 3.500 1.300-0.600L4 7.500h3z" fill="#fff" stroke="#555" stroke-width="0.800"></path></svg>
<div class="a " style="left:973.5px;top:180.3px;font-size:10px;color:#262626;"><span style="display:inline-block;width:20.00px;text-align:justify;text-align-last:justify;white-space:nowrap;">选择</span></div>
<svg style="left:997.2px;top:184.5px" width="5" height="3" viewBox="0 0 5 3"><path d="M0.300 0.300L2.500 2.500 4.700 0.300" stroke="#666" stroke-width="0.900" fill="none"></path></svg>
<div class="a " style="left:973.5px;top:199.300px;font-size:10px;color:#444;"><span style="display:inline-block;width:20.00px;text-align:justify;text-align-last:justify;white-space:nowrap;">编辑</span></div>
<div class="a" style="left:1018px;top:139px;width:1px;height:71px;background:#d4d4d4"></div>
<svg style="left:1035.500px;top:145px" width="22" height="17" viewBox="0 0 22 17"><circle cx="5.500" cy="11" r="4" stroke="#2aa0ea" stroke-width="3" fill="none"></circle><circle cx="16.500" cy="11" r="4" stroke="#2aa0ea" stroke-width="3" fill="none"></circle><circle cx="11" cy="5.500" r="3.500" stroke="#2aa0ea" stroke-width="3" fill="none"></circle><circle cx="11" cy="5.500" r="3.800" fill="#ee3d55"></circle><circle cx="11" cy="5" r="1.500" fill="#fff"></circle></svg>
<div class="a " style="left:1032px;top:169.4px;font-size:10px;color:#262626;"><span style="display:inline-block;width:30.00px;text-align:justify;text-align-last:justify;white-space:nowrap;">保存到</span></div>
<div class="a " style="left:1027px;top:182.3px;font-size:10px;color:#262626;"><span style="display:inline-block;width:40.00px;text-align:justify;text-align-last:justify;white-space:nowrap;">百度网盘</span></div>
<div class="a " style="left:1036.3px;top:199.300px;font-size:10px;color:#444;"><span style="display:inline-block;width:20.00px;text-align:justify;text-align-last:justify;white-space:nowrap;">保存</span></div>
<div class="a" style="left:1074.5px;top:139px;width:1px;height:71px;background:#d4d4d4"></div>
<svg style="left:1105.500px;top:205px" width="9" height="5" viewBox="0 0 9 5"><path d="M0.500 4.500L4.500 0.500l4 4" stroke="#555" stroke-width="0.900" fill="none"></path></svg>
<!-- QAT + body -->
<div class="a" style="left:0;top:213px;width:1121px;height:450px;background:#e6e6e6"></div>
<svg style="left:7px;top:222px" width="12" height="12" viewBox="0 0 12 12"><rect x="0.800" y="0.800" width="10.400" height="10.400" rx="1" fill="#efe9f5" stroke="#7d4aa8" stroke-width="1.600"></rect><rect x="2.600" y="1.600" width="6.800" height="3.600" fill="#fff"></rect><rect x="2.600" y="7.400" width="6.800" height="3.800" fill="#7d4aa8"></rect><rect x="4.800" y="8.600" width="2.400" height="2.600" fill="#fff"></rect></svg>
<svg style="left:31px;top:221px" width="13" height="12" viewBox="0 0 13 12"><path d="M1 4.500h7a4 3.500 0 0 1 0 7H6.500M4.500 1L1 4.500 4.500 8" stroke="#9b9b9b" stroke-width="1.400" fill="none"></path></svg>
<svg style="left:48px;top:226px" width="5" height="3" viewBox="0 0 5 3"><path d="M0 0l2.500 2.500L5 0" stroke="#aaa" fill="none"></path></svg>
<svg style="left:62px;top:220px" width="13" height="14" viewBox="0 0 13 14"><path d="M9.500 3.300A5 5 0 1 1 3.500 3.300" stroke="#2b6cb5" stroke-width="1.700" fill="none"></path><path d="M6 0.500h4.500V5z" fill="#2b6cb5"></path></svg>
<div class="a" style="left:90px;top:225px;width:5px;height:1px;background:#555"></div>
<svg style="left:90px;top:228px" width="5" height="3" viewBox="0 0 5 3"><path d="M0 0h5L2.500 3z" fill="#555"></path></svg>
<!-- left pane -->
<div class="a" style="left:11.500px;top:254px;font-size:17.400px;color:#2b579a"><span style="display:inline-block;width:68.00px;text-align:justify;text-align-last:justify;white-space:nowrap;">文档恢复</span></div>
<div class="a" style="left:15px;top:291px;font-size:10px;color:#333"><span style="display:inline-block;width:186.50px;text-align:justify;text-align-last:justify;white-space:nowrap;">Word 已恢复下列文件。请保存希望保留的</span></div><div class="a" style="left:15px;top:303px;font-size:10px;color:#333"><span style="display:inline-block;width:30.00px;text-align:justify;text-align-last:justify;white-space:nowrap;">文件。</span></div>
<div class="a" style="left:13px;top:393px;width:197px;height:53px;background:#c6c6c6"></div>
<div class="a tl" style="left:61px;top:340.200px;font-size:9.600px;color:#333"><span style="display:inline-block;width:121.34px;text-align:justify;text-align-last:justify;white-space:nowrap;">1.3、自评报告撰写工作安...</span></div>
<div class="a tl" style="left:61px;top:357.200px;font-size:9.600px;color:#888"><span style="display:inline-block;width:126.39px;text-align:justify;text-align-last:justify;white-space:nowrap;">上次“自动恢复”时创建的版本</span></div>
<div class="a tl" style="left:61px;top:374.200px;font-size:10.500px;color:#777"><span style="display:inline-block;width:94.98px;text-align:justify;text-align-last:justify;white-space:nowrap;">2021/8/13 上午 7:56</span></div>
<div class="a tl" style="left:61px;top:396.700px;font-size:9.600px;color:#111;font-weight:bold"><span style="display:inline-block;width:121.34px;text-align:justify;text-align-last:justify;white-space:nowrap;">1.3、自评报告撰写工作安...</span></div>
<div class="a tl" style="left:61px;top:413.700px;font-size:9.600px;color:#888"><span style="display:inline-block;width:128.00px;text-align:justify;text-align-last:justify;white-space:nowrap;">上次用户保存文件时创建的...</span></div>
<div class="a tl" style="left:61px;top:430.700px;font-size:10.500px;color:#777"><span style="display:inline-block;width:94.98px;text-align:justify;text-align-last:justify;white-space:nowrap;">2021/7/22 下午 6:13</span></div>
<!-- doc icons -->
<svg style="left:20px;top:346px" width="30" height="33" viewBox="0 0 30 33"><path d="M5.500 1.500h15.500l6.500 6.500v23.500h-22z" fill="#fff" stroke="#bdbdbd" stroke-width="1"></path><path d="M21 1.500v6.500h6.500" fill="none" stroke="#bdbdbd"></path><path d="M17.500 13h7M17.500 16h7M17.500 19h7" stroke="#5b8bd0" stroke-width="1.200"></path><rect x="0.500" y="9" width="16" height="14" fill="#1f5fbf"></rect><path d="M3.500 12l2.200 8.500 2.800-8.500 2.800 8.500 2.200-8.500" stroke="#fff" stroke-width="1.700" fill="none"></path></svg>
<svg style="left:20px;top:403px" width="30" height="33" viewBox="0 0 30 33"><path d="M5.500 1.500h15.500l6.500 6.500v23.500h-22z" fill="#fff" stroke="#bdbdbd" stroke-width="1"></path><path d="M21 1.500v6.500h6.500" fill="none" stroke="#bdbdbd"></path><path d="M17.500 13h7M17.500 16h7M17.500 19h7" stroke="#5b8bd0" stroke-width="1.200"></path><rect x="0.500" y="9" width="16" height="14" fill="#fff" stroke="#1f5fbf" stroke-width="1.400"></rect><path d="M3.500 12l2.200 8.500 2.800-8.500 2.800 8.500 2.200-8.500" stroke="#1f4fa8" stroke-width="1.800" fill="none"></path></svg>
<!-- help + close -->
<svg style="left:11px;top:614px" width="13" height="13" viewBox="0 0 13 13"><circle cx="6.500" cy="6.500" r="6.500" fill="#2b579a"></circle><text x="6.500" y="10.500" font-size="10" font-weight="bold" fill="#fff" text-anchor="middle" font-family="Liberation Sans">?</text></svg>
<div class="a" style="left:32px;top:615px;font-size:9.300px;color:#17305f;text-decoration:underline"><span style="display:inline-block;width:77.17px;text-align:justify;text-align-last:justify;white-space:nowrap;text-decoration:underline solid rgb(23, 48, 95);">希望保存哪个文件?</span></div>
<div class="a" style="left:177px;top:629px;width:35px;height:20px;background:#fdfdfd;border:1px solid #ababab;font-size:10.500px;color:#333;text-align:center;padding-top:4px"><span style="display:inline-block;width:22.00px;text-align:justify;text-align-last:justify;white-space:nowrap;">关闭</span></div>
<!-- overlay pill -->
<div class="a" style="left:12px;top:614px;width:116px;height:30px;background:rgba(58,58,58,0.560);border-radius:15px"></div>
<svg style="left:20px;top:620px" width="18" height="18" viewBox="0 0 18 18"><rect x="0" y="1" width="7" height="7" rx="1" fill="#b9b9b9"></rect><rect x="0" y="10" width="7" height="7" rx="1" fill="#b9b9b9"></rect><rect x="9.500" y="10" width="7" height="7" rx="1" fill="#b9b9b9"></rect><rect x="10.500" y="1.500" width="5" height="5" fill="none" stroke="#b9b9b9" stroke-width="1.300" transform="rotate(45 13 4)"></rect></svg>
<div class="a" style="left:43px;top:619px;width:1px;height:20px;background:#9a9a9a"></div>
<svg style="left:53px;top:620px" width="17" height="17" viewBox="0 0 17 17"><circle cx="8.500" cy="8.500" r="8.500" fill="#c4c4c4"></circle><circle cx="5.500" cy="6" r="1.200" fill="#767676"></circle><circle cx="11.500" cy="6" r="1.200" fill="#767676"></circle><path d="M3.500 9.500h10a5 5 0 0 1-10 0z" fill="#767676"></path></svg>
<svg style="left:78px;top:621px" width="16" height="15" viewBox="0 0 16 15"><path d="M1.500 0h13a1.500 1.500 0 0 1 1.500 1.500v8a1.500 1.500 0 0 1-1.500 1.500H13v3.500L9.500 11h-8A1.500 1.500 0 0 1 0 9.500v-8A1.500 1.500 0 0 1 1.500 0z" fill="#c4c4c4"></path><circle cx="4.500" cy="5.500" r="1" fill="#767676"></circle><circle cx="8" cy="5.500" r="1" fill="#767676"></circle><circle cx="11.500" cy="5.500" r="1" fill="#767676"></circle></svg>
<div class="a" style="left:99px;top:619px;width:1px;height:20px;background:#9a9a9a"></div>
<svg style="left:108px;top:624px" width="6" height="10" viewBox="0 0 6 10"><path d="M5 0.500L1 5l4 4.500" stroke="#a9a9a9" stroke-width="1.300" fill="none"></path></svg>
<!-- status bar -->
<div class="a" style="left:0;top:663px;width:1121px;height:18px;background:#f3f3f3;border-top:1px solid #e0e0e0"></div>
<div class="a" style="left:6px;top:667.500px;font-size:9.800px;word-spacing:0.800px;color:#444"><span style="display:inline-block;width:74.77px;text-align:justify;text-align-last:justify;white-space:nowrap;">第 1 页 , 共 2 页</span></div>
<div class="a" style="left:96.500px;top:667.500px;font-size:9.800px;color:#444"><span style="display:inline-block;width:39.08px;text-align:justify;text-align-last:justify;white-space:nowrap;">653 个字</span></div>
<svg style="left:152px;top:666px" width="12" height="11" viewBox="0 0 12 11"><path d="M5.500 1.500C4 0.300 2 0.300 0.500 1v8c1.500-0.700 3.500-0.700 5 0.500zM5.500 1.500c0.500-0.500 1.300-0.800 2-0.900M5.500 9.500V1.500" stroke="#666" stroke-width="0.900" fill="none"></path><path d="M8 2.500l3.500 4M11.500 2.500L8 6.500" stroke="#666" stroke-width="0.900"></path></svg>
<div class="a" style="left:178px;top:667.500px;font-size:9.800px;color:#444"><span style="display:inline-block;width:46.53px;text-align:justify;text-align-last:justify;white-space:nowrap;">中文(中国)</span></div>
<div class="a" style="left:239px;top:667.500px;font-size:9.800px;color:#444"><span style="display:inline-block;width:30.00px;text-align:justify;text-align-last:justify;white-space:nowrap;">已恢复</span></div>
<svg style="left:880px;top:666px" width="12" height="11" viewBox="0 0 12 11"><path d="M6 1.500C4.500 0.500 2.500 0.500 0.500 1v8.500c2-0.500 4-0.500 5.500 0.500 1.500-1 3.500-1 5.500-0.500V1C9.500 0.500 7.500 0.500 6 1.500zM6 1.500v8.500M2 3h2.500M2 5h2.500M2 7h2.500M7.500 3H10M7.500 5H10M7.500 7H10" stroke="#666" stroke-width="0.800" fill="none"></path></svg>
<div class="a" style="left:904px;top:663px;width:32px;height:18px;background:#c8c8c8"></div>
<svg style="left:914px;top:666px" width="12" height="11" viewBox="0 0 12 11"><path d="M0.500 0.500h11v10h-11zM2.500 3h7M2.500 5.500h7M2.500 8h7" stroke="#555" stroke-width="0.900" fill="none"></path></svg>
<svg style="left:947px;top:666px" width="13" height="12" viewBox="0 0 13 12"><path d="M6 9.500H0.500v-9h10V5M2.500 3h6M2.500 5.500h4" stroke="#666" stroke-width="0.900" fill="none"></path><circle cx="9.500" cy="8.500" r="3" stroke="#666" stroke-width="0.900" fill="#ddd"></circle></svg>
<div class="a" style="left:974px;top:672px;width:6px;height:1px;background:#555"></div>
<div class="a" style="left:985px;top:672px;width:82px;height:1px;background:#a9a9a9"></div>
<div class="a" style="left:1024.500px;top:667px;width:4px;height:10px;background:#5c5c5c"></div>
<div class="a" style="left:1071px;top:672px;width:7px;height:1px;background:#555"></div>
<div class="a" style="left:1074px;top:669px;width:1px;height:7px;background:#555"></div>
<div class="a" style="left:1088px;top:667.500px;font-size:10px;color:#444">100%</div>
<!--DOC-->
<div class="a" style="left:222px;top:240.500px;width:872px;height:408.500px;background:#fff;border-left:1px solid #cfcfcf;border-top:1px solid #dcdcdc"></div>
<div class="a" style="left:833px;top:241px;width:1px;height:408px;background:#c9c9c9"></div>
<div class="a s" style="left:250px;top:241.500px;font-size:14.500px;font-weight:bold;color:#2a2a2a;letter-spacing:0.500px"><span style="display:inline-block;width:232.50px;text-align:justify;text-align-last:justify;white-space:nowrap;">一、自评报告撰写任务分解一览表</span><span class="ret" style="font-weight:normal;font-size:12px">↵</span></div>
<div class="a hl" style="left:243px;top:267px;width:528px"></div>
<div class="a hl" style="left:243px;top:310px;width:528px"></div>
<div class="a hl" style="left:243px;top:398px;width:528px"></div>
<div class="a hl" style="left:243px;top:637px;width:528px"></div>
<div class="a hl" style="left:374px;top:336px;width:265px"></div>
<div class="a hl" style="left:374px;top:362px;width:265px"></div>
<div class="a hl" style="left:374px;top:424px;width:265px"></div>
<div class="a hl" style="left:374px;top:451px;width:265px"></div>
<div class="a hl" style="left:374px;top:477px;width:265px"></div>
<div class="a hl" style="left:374px;top:504px;width:265px"></div>
<div class="a hl" style="left:374px;top:531px;width:265px"></div>
<div class="a hl" style="left:374px;top:557px;width:265px"></div>
<div class="a hl" style="left:374px;top:584px;width:265px"></div>
<div class="a hl" style="left:374px;top:610px;width:265px"></div>
<div class="a vl" style="left:243px;top:267px;height:382px"></div>
<div class="a vl" style="left:374px;top:267px;height:382px"></div>
<div class="a vl" style="left:506px;top:267px;height:382px"></div>
<div class="a vl" style="left:638px;top:267px;height:382px"></div>
<div class="a vl" style="left:770px;top:267px;height:382px"></div>
<div class="a s" style="left:214.0px;top:282.9px;width:200px;text-align:center;font-size:13.3px;color:#1a1a1a;font-weight:bold;"><span style="display:inline-block;width:102.09px;text-align:justify;text-align-last:justify;white-space:nowrap;">一级指标（8 项）</span><span class="ret">↵</span></div>
<div class="a s" style="left:344.0px;top:282.9px;width:200px;text-align:center;font-size:13.3px;color:#1a1a1a;font-weight:bold;"><span style="display:inline-block;width:109.50px;text-align:justify;text-align-last:justify;white-space:nowrap;">二级指标（39 个）</span><span class="ret">↵</span></div>
<div class="a s" style="left:478.0px;top:282.9px;width:200px;text-align:center;font-size:13.3px;color:#1a1a1a;font-weight:bold;"><span style="display:inline-block;width:65.00px;text-align:justify;text-align-last:justify;white-space:nowrap;">三级指标（</span><span style="color:#8a8a8a;font-weight:normal;font-size:8px;letter-spacing:0.500px;vertical-align:1.500px">··</span><span style="text-decoration:underline wavy #d22;text-decoration-thickness:0.8px;text-underline-offset:2px"><span style="display:inline-block;width:13.00px;text-align:justify;text-align-last:justify;white-space:nowrap;text-decoration:underline wavy rgb(221, 34, 34);text-decoration-thickness:0.8px;text-underline-offset:2px;">个</span></span><span style="display:inline-block;width:13.00px;text-align:justify;text-align-last:justify;white-space:nowrap;">）</span><span class="ret">↵</span></div>
<div class="a s" style="left:609.0px;top:282.5px;width:200px;text-align:center;font-size:14px;color:#1a1a1a;font-weight:bold;letter-spacing:1px;"><span style="display:inline-block;width:109.89px;text-align:justify;text-align-last:justify;white-space:nowrap;">专项小组/责任人</span><span class="ret">↵</span></div>
<div class="a" style="left:404px;top:317.5px;font-size:13.3px;color:#222"><span style="letter-spacing:-0.2px">1.1</span> <span class="s"><span style="display:inline-block;width:52.00px;text-align:justify;text-align-last:justify;white-space:nowrap;">目标定位</span></span><span class="ret">↵</span></div>
<div class="a" style="left:404px;top:344.0px;font-size:13.3px;color:#222"><span style="letter-spacing:-0.2px">1.2</span> <span class="s"><span style="display:inline-block;width:52.00px;text-align:justify;text-align-last:justify;white-space:nowrap;">目标内涵</span></span><span class="ret">↵</span></div>
<div class="a" style="left:404px;top:374.0px;font-size:13.3px;color:#222"><span style="letter-spacing:-0.2px">1.3</span> <span class="s"><span style="display:inline-block;width:52.00px;text-align:justify;text-align-last:justify;white-space:nowrap;">目标评价</span></span><span class="ret">↵</span></div>
<div class="a" style="left:404px;top:405.0px;font-size:13.3px;color:#222"><span style="letter-spacing:-0.2px">2.1</span> <span class="s"><span style="display:inline-block;width:52.00px;text-align:justify;text-align-last:justify;white-space:nowrap;">毕业要求</span></span><span class="ret">↵</span></div>
<div class="a" style="left:404px;top:432.0px;font-size:13.3px;color:#222"><span style="letter-spacing:-0.2px">2.2</span> <span class="s"><span style="display:inline-block;width:52.00px;text-align:justify;text-align-last:justify;white-space:nowrap;">师德规范</span></span><span class="ret">↵</span></div>
<div class="a" style="left:404px;top:458.5px;font-size:13.3px;color:#222"><span style="letter-spacing:-0.2px">2.3</span> <span class="s"><span style="display:inline-block;width:52.00px;text-align:justify;text-align-last:justify;white-space:nowrap;">教育情怀</span></span><span class="ret">↵</span></div>
<div class="a" style="left:404px;top:485.0px;font-size:13.3px;color:#222"><span style="letter-spacing:-0.2px">2.4</span> <span class="s"><span style="display:inline-block;width:52.00px;text-align:justify;text-align-last:justify;white-space:nowrap;">学科素养</span></span><span class="ret">↵</span></div>
<div class="a" style="left:404px;top:511.5px;font-size:13.3px;color:#222"><span style="letter-spacing:-0.2px">2.5</span> <span class="s"><span style="display:inline-block;width:52.00px;text-align:justify;text-align-last:justify;white-space:nowrap;">教学能力</span></span><span class="ret">↵</span></div>
<div class="a" style="left:404px;top:538.0px;font-size:13.3px;color:#222"><span style="letter-spacing:-0.2px">2.6</span> <span class="s"><span style="display:inline-block;width:52.00px;text-align:justify;text-align-last:justify;white-space:nowrap;">班级指导</span></span><span class="ret">↵</span></div>
<div class="a" style="left:404px;top:564.5px;font-size:13.3px;color:#222"><span style="letter-spacing:-0.2px">2.7</span> <span class="s"><span style="display:inline-block;width:52.00px;text-align:justify;text-align-last:justify;white-space:nowrap;">综合育人</span></span><span class="ret">↵</span></div>
<div class="a" style="left:404px;top:591.5px;font-size:13.3px;color:#222"><span style="letter-spacing:-0.2px">2.8</span> <span class="s"><span style="display:inline-block;width:52.00px;text-align:justify;text-align-last:justify;white-space:nowrap;">学会反思</span></span><span class="ret">↵</span></div>
<div class="a" style="left:404px;top:618.0px;font-size:13.3px;color:#222"><span style="letter-spacing:-0.2px">2.9</span> <span class="s"><span style="display:inline-block;width:52.00px;text-align:justify;text-align-last:justify;white-space:nowrap;">沟通合作</span></span><span class="ret">↵</span></div>
<div class="a" style="left:404px;top:642px;height:7px;overflow:hidden;font-size:13.3px;color:#222">3.1 <span class="s"><span style="display:inline-block;width:52.00px;text-align:justify;text-align-last:justify;white-space:nowrap;">课程设置</span></span><span class="ret">↵</span></div>
<div class="a s" style="left:269px;top:347px;font-size:13.3px;color:#1a1a1a"><span style="display:inline-block;width:78.00px;text-align:justify;text-align-last:justify;white-space:nowrap;">一、培养目标</span><span class="ret">↵</span></div>
<div class="a s" style="left:269px;top:510px;font-size:13.3px;color:#1a1a1a"><span style="display:inline-block;width:78.00px;text-align:justify;text-align-last:justify;white-space:nowrap;">二、毕业要求</span><span class="ret">↵</span></div>
<div class="a ret" style="left:571.500px;top:313.0px;line-height:15px">↵</div>
<div class="a ret" style="left:571.500px;top:338.5px;line-height:15px">↵</div>
<div class="a ret" style="left:571.500px;top:364.5px;line-height:15px">↵</div>
<div class="a ret" style="left:571.500px;top:400.5px;line-height:15px">↵</div>
<div class="a ret" style="left:571.500px;top:426.5px;line-height:15px">↵</div>
<div class="a ret" style="left:571.500px;top:453.5px;line-height:15px">↵</div>
<div class="a ret" style="left:571.500px;top:480.0px;line-height:15px">↵</div>
<div class="a ret" style="left:571.500px;top:506.5px;line-height:15px">↵</div>
<div class="a ret" style="left:571.500px;top:532.5px;line-height:15px">↵</div>
<div class="a ret" style="left:571.500px;top:559.0px;line-height:15px">↵</div>
<div class="a ret" style="left:571.500px;top:586.0px;line-height:15px">↵</div>
<div class="a ret" style="left:571.500px;top:612.0px;line-height:15px">↵</div>
<div class="a ret" style="left:571.500px;top:638px;height:11px;overflow:hidden;line-height:15px">↵</div>
<div class="a s" style="left:643.5px;top:316.8px;width:120px;font-size:13.3px;color:#1a1a1a;text-align:justify;text-align-last:justify"><b><span style="display:inline-block;width:107.00px;text-align:justify;text-align-last:justify;white-space:nowrap;">李增垠；李存龙、</span></b><span style="display:inline-block;width:13.00px;text-align:justify;text-align-last:justify;white-space:nowrap;">刘</span></div>
<div class="a s" style="left:643.5px;top:338.8px;width:120px;font-size:13.3px;color:#1a1a1a;text-align:justify;text-align-last:justify"><span style="display:inline-block;width:120.00px;text-align:justify;text-align-last:justify;white-space:nowrap;">海云、赵丽莉 3 人撰</span></div>
<div class="a s" style="left:643.5px;top:360.8px;width:120px;font-size:13.3px;color:#1a1a1a;text-align:justify;text-align-last:justify"><span style="display:inline-block;width:120.00px;text-align:justify;text-align-last:justify;white-space:nowrap;">写文本并收集支撑材</span></div>
<div class="a s" style="left:643.5px;top:381.8px;font-size:13.3px;color:#1a1a1a"><span style="display:inline-block;width:26.00px;text-align:justify;text-align-last:justify;white-space:nowrap;">料；</span><span class="ret">↵</span></div>
<div class="a s" style="left:643.5px;top:458.3px;width:120px;font-size:13.3px;color:#1a1a1a;text-align:justify;text-align-last:justify"><b><span style="display:inline-block;width:107.00px;text-align:justify;text-align-last:justify;white-space:nowrap;">李增垠；纳成仓、</span></b><span style="display:inline-block;width:13.00px;text-align:justify;text-align-last:justify;white-space:nowrap;">刘</span></div>
<div class="a s" style="left:643.5px;top:479.3px;width:120px;font-size:13.3px;color:#1a1a1a;text-align:justify;text-align-last:justify"><span style="display:inline-block;width:120.00px;text-align:justify;text-align-last:justify;white-space:nowrap;">娇、裴正华、李存龙</span></div>
<div class="a s" style="left:643.5px;top:501.3px;font-size:13.3px;color:#1a1a1a"><span style="display:inline-block;width:53.80px;text-align:justify;text-align-last:justify;white-space:nowrap;">等 5 人；</span><span class="ret" style="font-size:9px">↵</span></div>
<div class="a s" style="left:643.5px;top:523.8px;width:120px;font-size:13.3px;color:#1a1a1a;text-align:justify;text-align-last:justify"><span style="display:inline-block;width:120.00px;text-align:justify;text-align-last:justify;white-space:nowrap;">支撑材料收集人：张</span></div>
<div class="a s" style="left:643.5px;top:545.3px;width:120px;font-size:13.3px;color:#1a1a1a;text-align:justify;text-align-last:justify"><span style="display:inline-block;width:92.91px;text-align:justify;text-align-last:justify;white-space:nowrap;">媛，6 月 23 日</span><span style="text-decoration:underline wavy #3a6fd8;text-decoration-thickness:0.8px;text-underline-offset:2px"><span style="display:inline-block;width:27.09px;text-align:justify;text-align-last:justify;white-space:nowrap;text-decoration:underline wavy rgb(58, 111, 216);text-decoration-thickness:0.8px;text-underline-offset:2px;">新增</span></span></div>
<div class="a s" style="left:643.5px;top:566.8px;font-size:13.3px;color:#1a1a1a"><span style="text-decoration:underline wavy #3a6fd8;text-decoration-thickness:0.8px;text-underline-offset:2px"><span style="display:inline-block;width:26.00px;text-align:justify;text-align-last:justify;white-space:nowrap;text-decoration:underline wavy rgb(58, 111, 216);text-decoration-thickness:0.8px;text-underline-offset:2px;">孟芳</span></span><span class="ret">↵</span></div>
<svg style="left:498px;top:456px" width="11" height="17" viewBox="0 0 11 17"><path d="M0.500 0.500v13l3-2.800 2 4.800 2-0.800-2-4.700h4z" fill="#fff" stroke="#222" stroke-width="0.900"></path></svg>
<div class="a" style="left:842px;top:464px;width:20px;height:20px;background:#1280dc"></div>
<svg style="left:842px;top:464px" width="20" height="20" viewBox="0 0 20 20"><circle cx="10" cy="7.500" r="3.800" fill="#fff"></circle><path d="M2.500 20c0.300-5 3.500-7.500 7.500-7.500s7.200 2.500 7.500 7.500z" fill="#fff"></path></svg>
<div class="a" style="left:870px;top:464.500px;font-size:10px;font-weight:bold;color:#111;font-family:'Liberation Serif',serif">Li</div>
<div class="a s" style="left:870px;top:480px;font-size:9.800px;color:#111"><span style="display:inline-block;width:20.00px;text-align:justify;text-align-last:justify;white-space:nowrap;">删除</span><span class="ret" style="font-size:8px">↵</span></div>
<!--TILE-->
<div class="a" style="left:929px;top:238px;width:192px;height:143px;background:#2b2d31"></div>
<div class="a" style="left:929px;top:238px;width:192px;height:31px;background:#33353a;border-bottom:2px solid #1d1e21"></div>
<svg style="left:940px;top:246px" width="9" height="13" viewBox="0 0 9 13"><rect x="2.500" y="0" width="4" height="7.500" rx="2" fill="#8a8c90"></rect><path d="M0.700 5.500a3.800 3.800 0 0 0 7.600 0M4.500 9.500v2.500M2 12.300h5" stroke="#8a8c90" stroke-width="1" fill="none"></path></svg>
<div class="a" style="left:958px;top:241px;width:1px;height:23px;background:#2a2b2f"></div>
<div class="a" style="left:964.500px;top:247.800px;font-size:9.800px;color:#fff"><span style="display:inline-block;width:113.63px;text-align:justify;text-align-last:justify;white-space:nowrap;">正在讲话: 马金芳; 李增垠;</span></div>
<div class="a" style="left:1062px;top:246px;width:13px;height:13px;background:rgba(255,255,255,0.090);transform:rotate(45deg)"></div><div class="a" style="left:1074px;top:243px;width:15px;height:15px;background:rgba(255,255,255,0.070);transform:rotate(45deg)"></div>
<svg style="left:1001.800px;top:286.800px" width="54" height="54" viewBox="0 0 56 56"><defs><clipPath id="av"><circle cx="28" cy="28" r="28"></circle></clipPath><linearGradient id="sky" x1="0" y1="0" x2="0" y2="1"><stop offset="0" stop-color="#5896d8"></stop><stop offset="0.600" stop-color="#8db6e2"></stop><stop offset="1" stop-color="#c3d6ea"></stop></linearGradient><linearGradient id="sea" x1="0" y1="0" x2="0" y2="1"><stop offset="0" stop-color="#4c8fa8"></stop><stop offset="1" stop-color="#6aa7ab"></stop></linearGradient><linearGradient id="snd" x1="0" y1="0" x2="0" y2="1"><stop offset="0" stop-color="#cfb47c"></stop><stop offset="1" stop-color="#8d7848"></stop></linearGradient></defs><g clip-path="url(#av)"><rect width="56" height="26" fill="url(#sky)"></rect><path d="M0 15c6-3 12-3 17-1.500s10 2 14 0.500 8-1 12 0.500 9 1 13 0v10H0z" fill="#dbe7f3" opacity="0.550"></path><rect y="24.800" width="56" height="16" fill="url(#sea)"></rect><path d="M38 24.800c5-1.500 10-2.200 18-2.400v2.600z" fill="#7f8a74"></path><path d="M0 33.500c10-1.500 22-2.500 34-3.500l4 1C26 32.500 12 34.500 0 36z" fill="#e4eef0" opacity="0.900"></path><path d="M0 41c16-2.500 36-6 56-8v23H0z" fill="url(#snd)"></path><path d="M0 40c16-2.500 36-6 56-8v1.500C36 35.500 16 39 0 42z" fill="#a9b9b0" opacity="0.700"></path><path d="M14 56c8-7 24-13 42-16v16z" fill="#7d6e40" opacity="0.550"></path></g></svg>
<div class="a" style="left:929px;top:359px;width:59px;height:22px;background:#1c1d20"></div>
<svg style="left:930px;top:370px" width="12" height="11" viewBox="0 0 12 11"><path d="M0 2l9 9M0 5l6 6M0 8l3 3M2 0l9 9" stroke="#bbb" stroke-width="0.900"></path></svg>
<svg style="left:933.500px;top:362.300px" width="9.300" height="13" viewBox="0 0 10 14"><rect x="2.800" y="0" width="4.400" height="8.500" rx="2.200" fill="#fff"></rect><path d="M0.700 6a4.300 4.300 0 0 0 8.600 0M5 10.500v2.500M2.300 13.300h5.400" stroke="#fff" stroke-width="1.100" fill="none"></path></svg>
<div class="a" style="left:945.500px;top:362.500px;font-size:12.900px;color:#fff"><span style="display:inline-block;width:39.00px;text-align:justify;text-align-last:justify;white-space:nowrap;">马金芳</span></div>
<div class="a" style="left:929px;top:379px;width:192px;height:2px;background:#0c0c0d"></div><div class="a" style="left:1106px;top:380px;width:15px;height:38px;background:#595959;border-radius:0 0 0 4px"></div>
<svg style="left:1109px;top:391px" width="7" height="12" viewBox="0 0 7 12"><path d="M6 0.500L1 6l5 5.500" stroke="#bdbdbd" stroke-width="1.200" fill="none"></path></svg>
<!-- audio meter -->
<div class="a" style="left:1113px;top:141px;width:7px;height:47px;background:#0d3b22;border-radius:3.500px;overflow:hidden"><div class="a" style="left:0;top:16px;width:7px;height:31px;background:repeating-linear-gradient(#1dc46a 0,#1dc46a 1.500px,#118a48 1.500px,#118a48 2.500px)"></div></div>
<!--TASKBAR-->
<div class="a" style="left:0;top:681px;width:1121px;height:32.500px;background:linear-gradient(90deg,#0a2237 0,#0c2a3a 40%,#0f3039 75%,#0e2e3a 100%)"></div>
<div class="a" style="left:0;top:713.500px;width:1121px;height:2px;background:#1a1c1f"></div>
<div class="a" style="left:202px;top:681px;width:39px;height:32.500px;background:#0d4a78"></div>
<div class="a" style="left:202px;top:712px;width:39px;height:1.500px;background:#8fc3ee"></div>
<div class="a" style="left:99px;top:712px;width:18px;height:1.500px;background:#6fa3cf"></div>
<div class="a" style="left:125px;top:712px;width:33px;height:1.500px;background:#6fa3cf"></div>
<div class="a" style="left:165px;top:712px;width:33px;height:1.500px;background:#6fa3cf"></div>
<svg style="left:13px;top:690px" width="14" height="14" viewBox="0 0 14 14"><path d="M0 2l6-0.900v5.600H0zM6.800 1L14 0v6.700H6.800zM0 7.500h6v5.600L0 12.200zM6.800 7.500H14V14l-7.200-1z" fill="#fff"></path></svg>
<svg style="left:52px;top:688.500px" width="17" height="17" viewBox="0 0 20 20"><circle cx="10" cy="10" r="8.500" fill="#4fc23a"></circle><circle cx="10" cy="10" r="8.500" fill="none" stroke="#8fe070" stroke-width="1"></circle><path d="M5.500 10.300h9c0-3-1.800-4.800-4.400-4.800-2.700 0-4.700 2-4.700 4.800 0 2.900 2 4.700 4.800 4.700 1.800 0 3.200-0.700 4-2" stroke="#fff" stroke-width="1.900" fill="none"></path><path d="M1 14C-1 18 5 17 9 14M19 5c2-4-3-4-7-1" stroke="#b8f09a" stroke-width="1" fill="none"></path></svg>
<svg style="left:92px;top:689px" width="19" height="16" viewBox="0 0 19 16"><path d="M0 1.500h6.500l1.500 2h10V15H0z" fill="#f3c94e"></path><path d="M0 5h18v10H0z" fill="#fbe08a"></path><path d="M5 9h8v6H5z" fill="#3da0e8"></path><path d="M7 12h4v3H7z" fill="#fbe08a"></path></svg>
<svg style="left:131px;top:687px" width="20" height="20" viewBox="0 0 20 20"><circle cx="10" cy="10" r="10" fill="#8f6f8a"></circle><circle cx="7" cy="8" r="5" fill="#c9a9c0"></circle><circle cx="13" cy="13" r="5" fill="#6a4a72"></circle><circle cx="12" cy="6" r="3" fill="#e0cad8"></circle></svg>
<svg style="left:171px;top:688px" width="21" height="18" viewBox="0 0 21 18"><path d="M7 0h13a1 1 0 0 1 1 1v16a1 1 0 0 1-1 1H7z" fill="#2b7cd3"></path><path d="M7 4.500h14v4.500H7z" fill="#41a5ee"></path><path d="M7 9h14v4.500H7z" fill="#2b7cd3"></path><path d="M7 13.500h14V17a1 1 0 0 1-1 1H7z" fill="#185abd"></path><rect x="0" y="4" width="11" height="11" rx="1" fill="#185abd"></rect><path d="M2 6.500l1.500 6 2-5.500 2 5.500 1.500-6" stroke="#fff" stroke-width="1.300" fill="none"></path></svg>
<svg style="left:212px;top:688px" width="19" height="19" viewBox="0 0 19 19"><rect width="19" height="19" rx="3.500" fill="#1a73ff"></rect><path d="M2.500 12l4-5.500 3 3.500 2.500-3 4.500 5.500-2 1.500-2.500-3-2.500 3-3-3.500-2 3z" fill="#fff"></path></svg>
<!-- tray -->
<svg style="left:858px;top:692px" width="10" height="7" viewBox="0 0 10 7"><path d="M0.500 6L5 1l4.500 5" stroke="#fff" stroke-width="1.200" fill="none"></path></svg>
<svg style="left:875px;top:692px" width="15" height="9" viewBox="0 0 15 9"><rect x="3.500" y="1.500" width="10" height="6.500" rx="0.500" stroke="#fff" stroke-width="1" fill="none"></rect><rect x="13.800" y="3.500" width="1.200" height="2.500" fill="#fff"></rect><path d="M1.500 0v4M0 1h3M1 4.500h1.500v3H1z" stroke="#fff" stroke-width="0.900" fill="none"></path></svg>
<svg style="left:897px;top:691px" width="12" height="11" viewBox="0 0 12 11"><path d="M1 10a9 9 0 0 1 10-9M3.500 10A6.500 6.500 0 0 1 11 3.800M6 10a4 4 0 0 1 5-3.700" stroke="#fff" stroke-width="1.100" fill="none"></path><circle cx="10" cy="9.500" r="1.300" fill="#fff"></circle></svg>
<svg style="left:915px;top:691px" width="13" height="11" viewBox="0 0 13 11"><path d="M0.500 3.500h2.500L6 0.700v9.600L3 7.500H0.500z" stroke="#fff" stroke-width="0.900" fill="none"></path><path d="M8 3.500a3 3 0 0 1 0 4M10 2a5 5 0 0 1 0 7M12 0.500a7.500 7.500 0 0 1 0 10" stroke="#fff" stroke-width="0.900" fill="none" opacity="0.850"></path></svg>
<svg style="left:934px;top:690px" width="15" height="14" viewBox="0 0 15 14"><path d="M0.700 0.700h12v9.500H5l-2.500 2V10.200H0.700z" fill="#fff"></path><path d="M2.500 3.500h8M2.500 6h8" stroke="#0c2b3d" stroke-width="1"></path><circle cx="11" cy="10.500" r="3" fill="#0c2b3d" stroke="#fff" stroke-width="0.900"></circle><path d="M9.500 10.500h3" stroke="#fff" stroke-width="0.900"></path></svg>
<div class="a" style="left:955px;top:692px;font-size:11.500px;color:#fff"><span style="display:inline-block;width:12.00px;text-align:justify;text-align-last:justify;white-space:nowrap;">中</span></div>
<svg style="left:977px;top:689px" width="14" height="15" viewBox="0 0 14 15"><path d="M1 2.500L12 0.500c1 0 1.500 0.500 1.500 1.500L12.500 12c0 1-0.500 1.500-1.500 1.700L2 14.500c-1 0-1.500-0.500-1.500-1.500L0 4c0-1 0.300-1.300 1-1.500z" fill="#e8511a"></path><path d="M10.500 4.500C8 3 4 3.500 4 5.800c0 2.400 6 1.300 6 3.700 0 2-4 2.300-6.500 1" stroke="#fff" stroke-width="1.900" fill="none"></path></svg>
<div class="a" style="left:1017px;top:685px;font-size:10px;color:#fff"><span style="display:inline-block;width:47.81px;text-align:justify;text-align-last:justify;white-space:nowrap;">10:06 周五</span></div>
<div class="a" style="left:1017px;top:699px;font-size:10px;color:#fff">2021/8/13</div>
<svg style="left:1095px;top:691px" width="12" height="13" viewBox="0 0 12 13"><path d="M0.500 1.500l2-1h9v11.500h-11zM3.500 4h5.500M3.500 6.500h5.500M3.500 9h3.500" stroke="#fff" stroke-width="0.900" fill="none"></path></svg>
<!--GREEN-->
<div class="a" style="left:0;top:84px;width:98px;height:4px;background:#07d07a"></div>
<div class="a" style="left:0;top:84px;width:5px;height:98px;background:#07d07a"></div>
<div class="a" style="left:1022px;top:84px;width:99px;height:4px;background:#07d07a"></div>
<div class="a" style="left:1116px;top:84px;width:5px;height:57px;background:#07d07a"></div>
<div class="a" style="left:0;top:615px;width:5px;height:98.500px;background:#07d07a"></div>
<div class="a" style="left:0;top:708.500px;width:98px;height:5px;background:#07d07a"></div>
<div class="a" style="left:1116px;top:615px;width:5px;height:98.500px;background:#07d07a"></div>
<div class="a" style="left:1022px;top:708.500px;width:99px;height:5px;background:#07d07a"></div>
<!--FLOAT-->
<div class="a" style="left:244px;top:84px;width:632.500px;height:65.500px;background:#fdfdfd;border-radius:0 0 3px 3px;box-shadow:0 1px 4px rgba(0,0,0,0.280)"></div>
<svg style="left:504px;top:91px" width="10" height="8" viewBox="0 0 10 8"><rect x="0" y="4.500" width="2.200" height="3.500" rx="0.500" fill="#07c160"></rect><rect x="3.700" y="2.300" width="2.200" height="5.700" rx="0.500" fill="#07c160"></rect><rect x="7.400" y="0" width="2.200" height="8" rx="0.500" fill="#07c160"></rect></svg>
<div class="a" style="left:524.500px;top:90px;font-size:11px;color:#222">01:40:36</div>
<div class="a" style="left:577px;top:90.500px;font-size:10.300px;color:#222"><span style="display:inline-block;width:40.00px;text-align:justify;text-align-last:justify;white-space:nowrap;">腾讯会议</span></div>
<!-- mic -->
<svg style="left:286px;top:110px" width="16" height="20" viewBox="0 0 16 20"><rect x="4.500" y="0" width="7" height="12" rx="3.500" fill="#4a4b4f"></rect><path d="M1.200 8.500a6.800 6.800 0 0 0 13.600 0M8 15.500v3.500M3.500 19.200h9" stroke="#4a4b4f" stroke-width="1.500" fill="none"></path></svg>
<div class="a ft" style="left:259px"><span style="display:inline-block;width:18.00px;text-align:justify;text-align-last:justify;white-space:nowrap;">静音</span></div>
<svg style="left:318px;top:118px" width="8" height="5" viewBox="0 0 8 5"><path d="M0 0h8L4 5z" fill="#5a5b60"></path></svg>
<!-- cam -->
<svg style="left:339px;top:112px" width="22" height="16" viewBox="0 0 22 16"><rect x="0" y="1.500" width="15" height="13" rx="1.500" fill="#4a4b4f"></rect><path d="M15.500 6L21 2.500v11L15.500 10z" fill="#4a4b4f"></path><path d="M3 15.500L15 0" stroke="#fdfdfd" stroke-width="3.200"></path><path d="M3 15.500L15 0" stroke="#f0524f" stroke-width="1.800"></path></svg>
<div class="a ft" style="left:314.500px"><span style="display:inline-block;width:36.00px;text-align:justify;text-align-last:justify;white-space:nowrap;">开启视频</span></div>
<svg style="left:373.500px;top:118px" width="8" height="5" viewBox="0 0 8 5"><path d="M0 0h8L4 5z" fill="#5a5b60"></path></svg>
<!-- members -->
<svg style="left:401px;top:111px" width="20" height="18" viewBox="0 0 20 18"><circle cx="11.500" cy="4.500" r="3.800" fill="none" stroke="#4a4b4f" stroke-width="0.900"></circle><path d="M3.500 17c0.500-5 3.500-7.500 8-7.500s7.500 2.500 8 7.500" fill="none" stroke="#4a4b4f" stroke-width="0.900"></path><circle cx="9.500" cy="5" r="3.800" fill="#4a4b4f"></circle><path d="M0.500 17.500c0.500-5.500 4-8 9-8s8.500 2.500 9 8z" fill="#4a4b4f"></path></svg>
<div class="a ft" style="left:375.500px"><span style="display:inline-block;width:34.34px;text-align:justify;text-align-last:justify;white-space:nowrap;">成员(24)</span></div>
<!-- emoji -->
<svg style="left:456.500px;top:110.500px" width="19" height="19" viewBox="0 0 19 19"><circle cx="9.500" cy="9.500" r="9.500" fill="#4a4b4f"></circle><circle cx="6.200" cy="6.800" r="1.400" fill="#fdfdfd"></circle><circle cx="12.800" cy="6.800" r="1.400" fill="#fdfdfd"></circle><path d="M3.500 10.300h12a6 6 0 0 1-12 0z" fill="#fdfdfd"></path></svg>
<div class="a ft" style="left:431px"><span style="display:inline-block;width:18.00px;text-align:justify;text-align-last:justify;white-space:nowrap;">表情</span></div>
<!-- more -->
<svg style="left:512px;top:118px" width="14" height="4" viewBox="0 0 14 4"><circle cx="2" cy="2" r="1.900" fill="#4a4b4f"></circle><circle cx="7.800" cy="2" r="1.900" fill="#4a4b4f"></circle></svg>
<div class="a" style="left:524.500px;top:109px;width:13px;height:13px;border-radius:50%;background:#f5504f;color:#fff;font-size:9px;text-align:center;padding-top:1.500px">1</div>
<div class="a ft" style="left:487px"><span style="display:inline-block;width:18.00px;text-align:justify;text-align-last:justify;white-space:nowrap;">更多</span></div>
<div class="a" style="left:558px;top:111px;width:1px;height:26px;background:#e4e4e4"></div>
<!-- new share -->
<svg style="left:579px;top:112px" width="22" height="19" viewBox="0 0 22 19"><rect x="0" y="0" width="22" height="14.600" rx="1.500" fill="#4f5055"></rect><rect x="4.500" y="17" width="13" height="1.500" rx="0.500" fill="#4f5055"></rect><path d="M7.500 10c0.500-3 2.500-4.500 5-4.500V3.500l3.500 3-3.500 3V7.700c-2 0-3.500 0.500-5 2.300z" fill="#fdfdfd"></path></svg>
<div class="a ft" style="left:555px;top:134.500px"><span style="display:inline-block;width:36.00px;text-align:justify;text-align-last:justify;white-space:nowrap;">新的共享</span></div>
<svg style="left:614.500px;top:118px" width="8" height="5" viewBox="0 0 8 5"><path d="M0 0h8L4 5z" fill="#5a5b60"></path></svg>
<!-- pause -->
<svg style="left:639.500px;top:112px" width="22" height="19" viewBox="0 0 22 19"><rect x="0" y="0" width="22" height="14.600" rx="1.500" fill="#4f5055"></rect><rect x="4.500" y="17" width="13" height="1.500" rx="0.500" fill="#4f5055"></rect><rect x="7.800" y="3.500" width="2.200" height="6.500" fill="#fdfdfd"></rect><rect x="12" y="3.500" width="2.200" height="6.500" fill="#fdfdfd"></rect></svg>
<div class="a ft" style="left:615.500px;top:134.500px"><span style="display:inline-block;width:36.00px;text-align:justify;text-align-last:justify;white-space:nowrap;">暂停共享</span></div>
<!-- annotate -->
<svg style="left:689.500px;top:111px" width="20" height="20" viewBox="0 0 20 20"><path d="M8.500 2H16a2 2 0 0 1 2 2v12a2 2 0 0 1-2 2H4a2 2 0 0 1-2-2V8.500" stroke="#4f5055" stroke-width="1.900" fill="none"></path><path d="M1 2.800L3.600 0.200l9.900 9.900 1 4-4-1z" fill="#4f5055"></path></svg>
<div class="a ft" style="left:665px;top:134.500px"><span style="display:inline-block;width:36.00px;text-align:justify;text-align-last:justify;white-space:nowrap;">互动批注</span></div>
<svg style="left:724.500px;top:118px" width="8" height="5" viewBox="0 0 8 5"><path d="M0 0h8L4 5z" fill="#5a5b60"></path></svg>
<div class="a" style="left:743px;top:111px;width:1px;height:26px;background:#e4e4e4"></div>
<div class="a" style="left:760px;top:110px;width:62px;height:29px;border:1px solid #f08c8c;border-radius:3px;background:#fff;color:#ef5350;font-size:10.500px;text-align:center;padding-top:8px"><span style="display:inline-block;width:44.00px;text-align:justify;text-align-last:justify;white-space:nowrap;">结束共享</span></div>
<!--BOTTOM-->
<div class="a" style="left:0;top:715.500px;width:1121px;height:54px;background:#fafafa"></div>
<!-- b mic -->
<svg style="left:24px;top:722px" width="18" height="25" viewBox="0 0 18 25"><rect x="5.500" y="0.500" width="7" height="14" rx="3.500" fill="#4a4b4f"></rect><path d="M1.500 10.500a7.500 7.500 0 0 0 15 0M9 18.500v4M4 23.700h10" stroke="#4a4b4f" stroke-width="1.500" fill="none"></path><path d="M1 19L16 3" stroke="#fafafa" stroke-width="3.200"></path><path d="M0.500 19.500L16.500 2.500" stroke="#f0524f" stroke-width="1.900"></path></svg>
<div class="a bt" style="left:-7px"><span style="display:inline-block;width:44.00px;text-align:justify;text-align-last:justify;white-space:nowrap;">解除静音</span></div>
<svg style="left:62.500px;top:732.500px" width="9" height="5.500" viewBox="0 0 9 5.500"><path d="M0 5.500h9L4.500 0z" fill="#6a6b6e"></path></svg>
<!-- b cam -->
<svg style="left:89px;top:725px" width="25" height="18" viewBox="0 0 25 18"><rect x="0" y="1.500" width="17" height="15" rx="1.800" fill="#4a4b4f"></rect><path d="M17.500 6.500L24 2.500v13l-6.500-4z" fill="#4a4b4f"></path><path d="M2 18L17 0" stroke="#fafafa" stroke-width="3.400"></path><path d="M2 18L17 0" stroke="#f0524f" stroke-width="2"></path></svg>
<div class="a bt" style="left:61px"><span style="display:inline-block;width:44.00px;text-align:justify;text-align-last:justify;white-space:nowrap;">开启视频</span></div>
<svg style="left:130.500px;top:732.500px" width="9" height="5.500" viewBox="0 0 9 5.500"><path d="M0 5.500h9L4.500 0z" fill="#6a6b6e"></path></svg>
<!-- b share -->
<svg style="left:272.500px;top:726px" width="24" height="19" viewBox="0 0 24 19"><rect x="0" y="0" width="24" height="15" rx="1.800" fill="#4a4b4f"></rect><rect x="6.500" y="16.800" width="11" height="2" rx="0.500" fill="#4a4b4f"></rect><path d="M8 11c0.500-3.300 2.800-5 5.500-5V3.800l4 3.400-4 3.400V8.500C11.300 8.500 9.600 9 8 11z" fill="#fafafa"></path></svg>
<div class="a bt" style="left:244.500px"><span style="display:inline-block;width:44.00px;text-align:justify;text-align-last:justify;white-space:nowrap;">共享屏幕</span></div>
<svg style="left:314.500px;top:732.500px" width="9" height="5.500" viewBox="0 0 9 5.500"><path d="M0 5.500h9L4.500 0z" fill="#6a6b6e"></path></svg>
<!-- b invite -->
<svg style="left:348px;top:724px" width="23" height="21" viewBox="0 0 23 21"><circle cx="9.500" cy="5" r="4.500" fill="#4a4b4f"></circle><path d="M0.500 20.500c0.300-6.500 4-9.500 9-9.500 2 0 3.800 0.500 5.200 1.500a6.500 6.500 0 0 0-1.200 8z" fill="#4a4b4f"></path><circle cx="17.500" cy="15.500" r="5" fill="#4a4b4f"></circle><path d="M17.500 12.500v6M14.500 15.500h6" stroke="#fafafa" stroke-width="1.500"></path></svg>
<div class="a bt" style="left:319px"><span style="display:inline-block;width:22.00px;text-align:justify;text-align-last:justify;white-space:nowrap;">邀请</span></div>
<!-- b members -->
<svg style="left:416px;top:724px" width="24" height="21" viewBox="0 0 24 21"><circle cx="13.500" cy="5" r="4.300" fill="none" stroke="#4a4b4f" stroke-width="1"></circle><path d="M4.500 20c0.500-6 4-9 9-9s8.500 3 9 9" fill="none" stroke="#4a4b4f" stroke-width="1"></path><circle cx="11.500" cy="5.500" r="4.500" fill="#4a4b4f"></circle><path d="M1 20.500c0.500-6.500 4.500-9.500 10.500-9.500s10 3 10.500 9.500z" fill="#4a4b4f"></path></svg>
<div class="a bt" style="left:387px"><span style="display:inline-block;width:41.02px;text-align:justify;text-align-last:justify;white-space:nowrap;">成员(24)</span></div>
<!-- b chat -->
<svg style="left:484.500px;top:726px" width="21" height="20" viewBox="0 0 21 20"><path d="M2 0h17a2 2 0 0 1 2 2v11a2 2 0 0 1-2 2h-2v4.500L12.500 15H2a2 2 0 0 1-2-2V2a2 2 0 0 1 2-2z" fill="#4a4b4f"></path><circle cx="6" cy="7.500" r="1.400" fill="#fafafa"></circle><circle cx="10.500" cy="7.500" r="1.400" fill="#fafafa"></circle><circle cx="15" cy="7.500" r="1.400" fill="#fafafa"></circle></svg>
<div class="a bt" style="left:455px"><span style="display:inline-block;width:22.00px;text-align:justify;text-align-last:justify;white-space:nowrap;">聊天</span></div>
<!-- b record -->
<svg style="left:552px;top:723px" width="22" height="22" viewBox="0 0 22 22"><circle cx="11" cy="11" r="10" fill="none" stroke="#4a4b4f" stroke-width="1.600"></circle><circle cx="11" cy="11" r="7.600" fill="#4a4b4f"></circle></svg>
<div class="a bt" style="left:523px"><span style="display:inline-block;width:22.00px;text-align:justify;text-align-last:justify;white-space:nowrap;">录制</span></div>
<!-- b live -->
<svg style="left:620px;top:723px" width="22" height="20" viewBox="0 0 22 20"><path d="M6 0.500l3 3.500M16 0.500l-3 3.500" stroke="#4a4b4f" stroke-width="1.700" fill="none"></path><rect x="0" y="3.500" width="22" height="16" rx="2" fill="#4a4b4f"></rect><path d="M8.500 7l7 4.500-7 4.500z" fill="#fafafa"></path></svg>
<div class="a bt" style="left:591px"><span style="display:inline-block;width:22.00px;text-align:justify;text-align-last:justify;white-space:nowrap;">直播</span></div>
<!-- b emoji -->
<svg style="left:688px;top:723px" width="22" height="22" viewBox="0 0 22 22"><circle cx="11" cy="11" r="11" fill="#4a4b4f"></circle><circle cx="7.200" cy="8" r="1.600" fill="#fafafa"></circle><circle cx="14.800" cy="8" r="1.600" fill="#fafafa"></circle><path d="M4 12h14a7 7 0 0 1-14 0z" fill="#fafafa"></path></svg>
<div class="a bt" style="left:659px"><span style="display:inline-block;width:22.00px;text-align:justify;text-align-last:justify;white-space:nowrap;">表情</span></div>
<!-- b docs -->
<svg style="left:759px;top:723px" width="17" height="22" viewBox="0 0 17 22"><path d="M2 0h9.500L17 5.500V20a2 2 0 0 1-2 2H2a2 2 0 0 1-2-2V2a2 2 0 0 1 2-2z" fill="#4a4b4f"></path><path d="M11.500 0L17 5.500h-4a1.500 1.500 0 0 1-1.500-1.500z" fill="#fafafa" opacity="0.900"></path><path d="M11.900 0.400L16.600 5.100" stroke="#4a4b4f" stroke-width="0.800"></path><rect x="3.500" y="11.500" width="10" height="2" fill="#fafafa"></rect><rect x="3.500" y="15.500" width="10" height="2" fill="#fafafa"></rect></svg>
<div class="a bt" style="left:727px"><span style="display:inline-block;width:35.06px;text-align:justify;text-align-last:justify;white-space:nowrap;">文档(1)</span></div>
<!-- b settings -->
<svg style="left:824px;top:723px" width="22" height="22" viewBox="0 0 22 22"><g fill="#4a4b4f"><circle cx="11" cy="11" r="8.200"></circle><g id="tt"><rect x="8.300" y="0" width="5.400" height="22" rx="1"></rect></g><rect x="8.300" y="0" width="5.400" height="22" rx="1" transform="rotate(60 11 11)"></rect><rect x="8.300" y="0" width="5.400" height="22" rx="1" transform="rotate(120 11 11)"></rect></g><circle cx="11" cy="11" r="3.600" fill="#fafafa"></circle></svg>
<div class="a bt" style="left:795px"><span style="display:inline-block;width:22.00px;text-align:justify;text-align-last:justify;white-space:nowrap;">设置</span></div>
<div class="a" style="left:1013px;top:724px;width:76px;height:36px;border:1px solid #f26d6d;border-radius:5px;background:#fff;color:#f0504e;font-size:12.700px;text-align:center;padding-top:10.500px"><span style="display:inline-block;width:52.00px;text-align:justify;text-align-last:justify;white-space:nowrap;">离开会议</span></div>
</div>

</body></html>
